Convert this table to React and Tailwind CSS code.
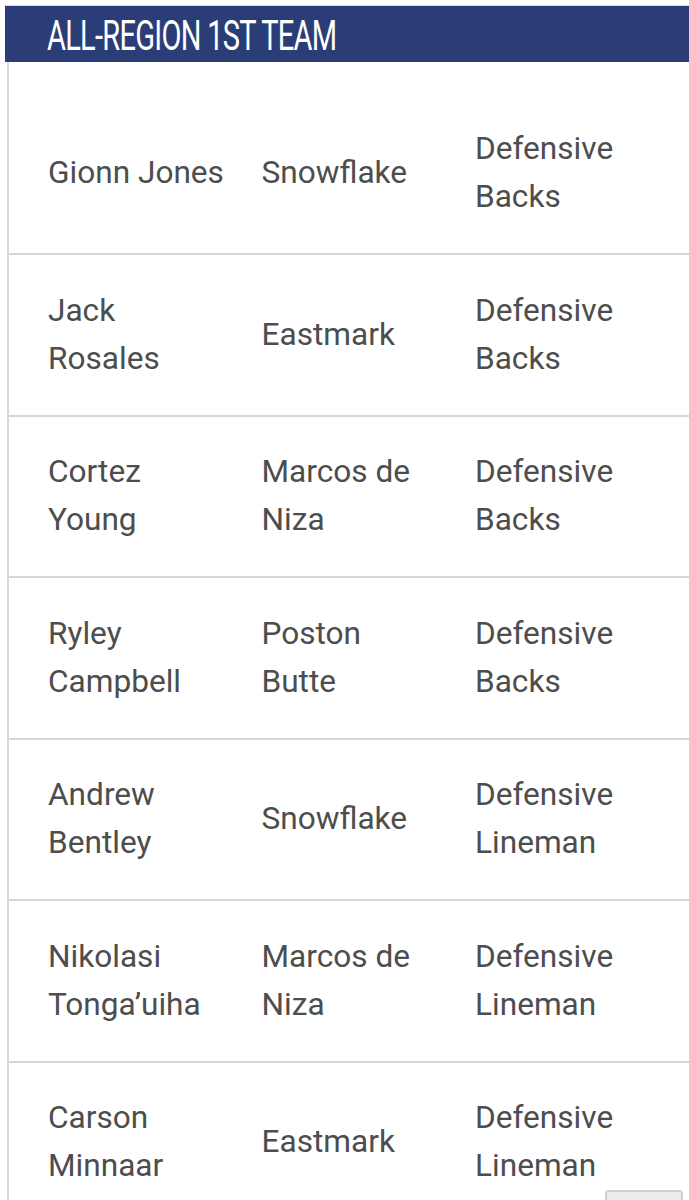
const rows = [
  { name: ['Gionn Jones'], school: ['Snowflake'], pos: ['Defensive', 'Backs'] },
  { name: ['Jack', 'Rosales'], school: ['Eastmark'], pos: ['Defensive', 'Backs'] },
  { name: ['Cortez', 'Young'], school: ['Marcos de', 'Niza'], pos: ['Defensive', 'Backs'] },
  { name: ['Ryley', 'Campbell'], school: ['Poston', 'Butte'], pos: ['Defensive', 'Backs'] },
  { name: ['Andrew', 'Bentley'], school: ['Snowflake'], pos: ['Defensive', 'Lineman'] },
  { name: ['Nikolasi', 'Tonga\u2019uiha'], school: ['Marcos de', 'Niza'], pos: ['Defensive', 'Lineman'] },
  { name: ['Carson', 'Minnaar'], school: ['Eastmark'], pos: ['Defensive', 'Lineman'] },
];

function Cell({ lines }) {
  return (
    <div className="w-[213.5px] shrink-0 pl-[39px] flex flex-col justify-center">
      {lines.map((l) => (
        <span key={l} className="block whitespace-nowrap">{l}</span>
      ))}
    </div>
  );
}

export default function App() {
  return (
    <div className="relative h-[1200px] overflow-hidden bg-white font-['Roboto',sans-serif]">
      <div className="ml-[5px] mt-[5px] border-t border-[#dcdcdc] bg-[#2b3d77] h-[57px] flex items-center pl-[42px] pt-[3px]">
        <h2 className="inline-block origin-left scale-x-[0.675] text-[43px] leading-none font-normal uppercase text-white whitespace-nowrap tracking-tight">
          All-Region 1st Team
        </h2>
      </div>

      <div className="ml-[7px] border-l-2 border-[#d9d9d9]">
        <div className="h-[31px]" />
        {rows.map((r, i) => (
          <div
            key={i}
            className={`flex border-b-2 border-[#d6d6d6] text-[31.6px] leading-[48px] text-[#4d4d4d] ${i === 0 ? 'h-[162px]' : 'h-[161.5px]'}`}
          >
            <Cell lines={r.name} />
            <Cell lines={r.school} />
            <Cell lines={r.pos} />
          </div>
        ))}
      </div>

      <div className="absolute left-[605px] top-[1190px] w-[78px] h-[30px] bg-[#ececec] border-2 border-[#cfcfcf] rounded-sm" />
    </div>
  );
}
